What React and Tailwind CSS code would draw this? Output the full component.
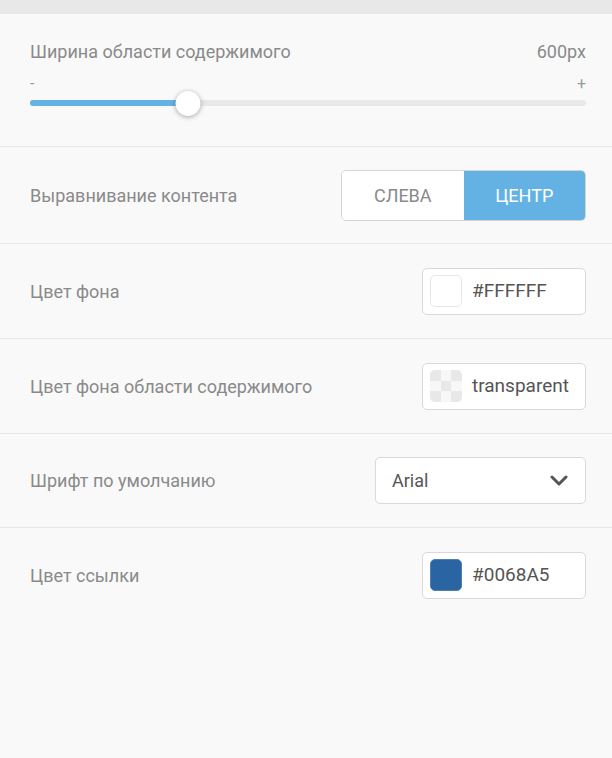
import { useState } from "react";

function ColorField({ value, swatch }) {
  return (
    <div className="flex h-[47px] w-[164px] items-center rounded-[5px] border border-[#d9d9d9] bg-white pl-[7px]">
      {swatch}
      <span className="ml-[10px] text-[19px] text-[#555]">{value}</span>
    </div>
  );
}

function Row({ label, children, h = "h-[95px]" }) {
  return (
    <div className={`flex ${h} items-center justify-between border-b border-[#e6e6e6] pl-[30px] pr-[26px]`}>
      <span className="text-[18px] text-[#8a8a8a]">{label}</span>
      {children}
    </div>
  );
}

export default function App() {
  const [align, setAlign] = useState("center");
  const [width] = useState(600);
  const pct = 28.4;

  return (
    <div className="min-h-[758px] bg-[#f9f9f9] font-['Roboto',sans-serif]">
      <div className="h-[14px] bg-[#e8e8e8]" />

      <div className="border-b border-[#e6e6e6] pl-[30px] pr-[26px] pt-[26px] pb-[31px]">
        <div className="flex items-center justify-between text-[18px] leading-[24px] text-[#8a8a8a]">
          <span>Ширина области содержимого</span>
          <span>{width}px</span>
        </div>
        <div className="mt-[12px] flex items-center justify-between text-[16px] leading-[15px] text-[#9a9a9a]">
          <span>-</span>
          <span>+</span>
        </div>
        <div className="relative h-[24px]">
          <div className="absolute left-0 right-0 top-[9px] h-[6px] rounded-full bg-[#e8e8e8]" />
          <div
            className="absolute left-0 top-[9px] h-[6px] rounded-full bg-[#64b2e4]"
            style={{ width: `${pct}%` }}
          />
          <div
            className="absolute top-0 h-[25px] w-[25px] -translate-x-1/2 rounded-full bg-white shadow-[0_1px_5px_rgba(0,0,0,0.35)]"
            style={{ left: `${pct}%` }}
          />
        </div>
      </div>

      <Row label="Выравнивание контента" h="h-[97px]">
        <div className="flex h-[51px] w-[245px] overflow-hidden rounded-[5px] border border-[#d4d4d4] text-[18px]">
          <button
            onClick={() => setAlign("left")}
            className={`flex-1 ${align === "left" ? "bg-[#64b2e4] text-white" : "bg-white text-[#8a8a8a]"}`}
          >
            СЛЕВА
          </button>
          <button
            onClick={() => setAlign("center")}
            className={`flex-1 ${align === "center" ? "bg-[#64b2e4] text-white" : "bg-white text-[#8a8a8a]"}`}
          >
            ЦЕНТР
          </button>
        </div>
      </Row>

      <Row label="Цвет фона">
        <ColorField
          value="#FFFFFF"
          swatch={<div className="h-[32px] w-[32px] rounded-[5px] border border-[#e6e6e6] bg-white" />}
        />
      </Row>

      <Row label="Цвет фона области содержимого">
        <ColorField
          value="transparent"
          swatch={
            <div className="grid h-[32px] w-[32px] grid-cols-3 grid-rows-3 overflow-hidden rounded-[5px] bg-[#f7f7f7]">
              <div className="bg-[#e8e8e8]" />
              <div />
              <div className="bg-[#e8e8e8]" />
              <div />
              <div className="bg-[#e8e8e8]" />
              <div />
              <div className="bg-[#e8e8e8]" />
              <div />
              <div className="bg-[#e8e8e8]" />
            </div>
          }
        />
      </Row>

      <Row label="Шрифт по умолчанию" h="h-[94px]">
        <div className="flex h-[47px] w-[211px] items-center justify-between rounded-[5px] border border-[#d9d9d9] bg-white pl-[16px] pr-[17px]">
          <span className="text-[18px] text-[#555]">Arial</span>
          <svg width="18" height="11" viewBox="0 0 18 11" fill="none">
            <path d="M2 2l7 7 7-7" stroke="#555" strokeWidth="3" strokeLinecap="round" strokeLinejoin="round" />
          </svg>
        </div>
      </Row>

      <div className="flex h-[94px] items-center justify-between pl-[30px] pr-[26px]">
        <span className="text-[18px] text-[#8a8a8a]">Цвет ссылки</span>
        <ColorField
          value="#0068A5"
          swatch={<div className="h-[32px] w-[32px] rounded-[5px] border border-[#4f7fb0] bg-[#2a64a3]" />}
        />
      </div>
    </div>
  );
}
